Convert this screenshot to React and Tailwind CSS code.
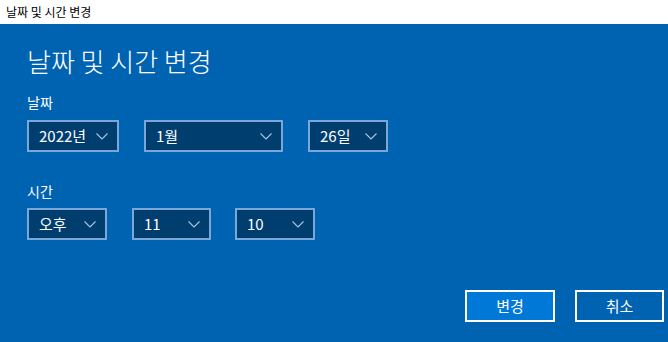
import React from 'react';

const Chevron = () => (
  <svg width="12" height="7" viewBox="0 0 12 7" fill="none" className="shrink-0">
    <path d="M0.5 0.5 L6 6 L11.5 0.5" stroke="#a9c6e4" strokeWidth="1.1" />
  </svg>
);

const Select = ({ value, className }) => (
  <div
    className={`flex h-[32px] items-center justify-between border-2 border-[#7aa7d6] bg-[#003e70] pl-[10px] pr-[9px] text-[15px] text-white ${className}`}
  >
    <span>{value}</span>
    <Chevron />
  </div>
);

const App = () => {
  return (
    <div
      className="flex h-[342px] w-[668px] flex-col overflow-hidden"
      style={{ fontFamily: '"Noto Sans CJK KR", "Noto Sans", sans-serif' }}
    >
      {/* Title bar */}
      <div className="flex h-[24px] items-center bg-white pl-[6px] text-[12px] text-black">
        날짜 및 시간 변경
      </div>

      {/* Dialog body */}
      <div className="flex flex-1 flex-col bg-[#0063b1] pl-[27px] text-white">
        <div className="mt-[19px] text-[26px] font-light leading-[36px]">날짜 및 시간 변경</div>

        <div className="mt-[13px] text-[14px] leading-[20px]">날짜</div>
        <div className="mt-[8px] flex">
          <Select value="2022년" className="w-[92px]" />
          <Select value="1월" className="ml-[25px] w-[139px]" />
          <Select value="26일" className="ml-[25px] w-[80px]" />
        </div>

        <div className="mt-[29px] text-[14px] leading-[20px]">시간</div>
        <div className="mt-[7px] flex">
          <Select value="오후" className="w-[80px]" />
          <Select value="11" className="ml-[25px] w-[79px]" />
          <Select value="10" className="ml-[24px] w-[80px]" />
        </div>

        <div className="mt-[50px] flex justify-end pr-[4px]">
          <button className="h-[32px] w-[90px] border-2 border-white bg-[#0078d7] text-[15px] text-white">
            변경
          </button>
          <button className="ml-[20px] h-[32px] w-[89px] border-2 border-white bg-[#0063b1] text-[15px] text-white">
            취소
          </button>
        </div>
      </div>
    </div>
  );
};

export default App;
